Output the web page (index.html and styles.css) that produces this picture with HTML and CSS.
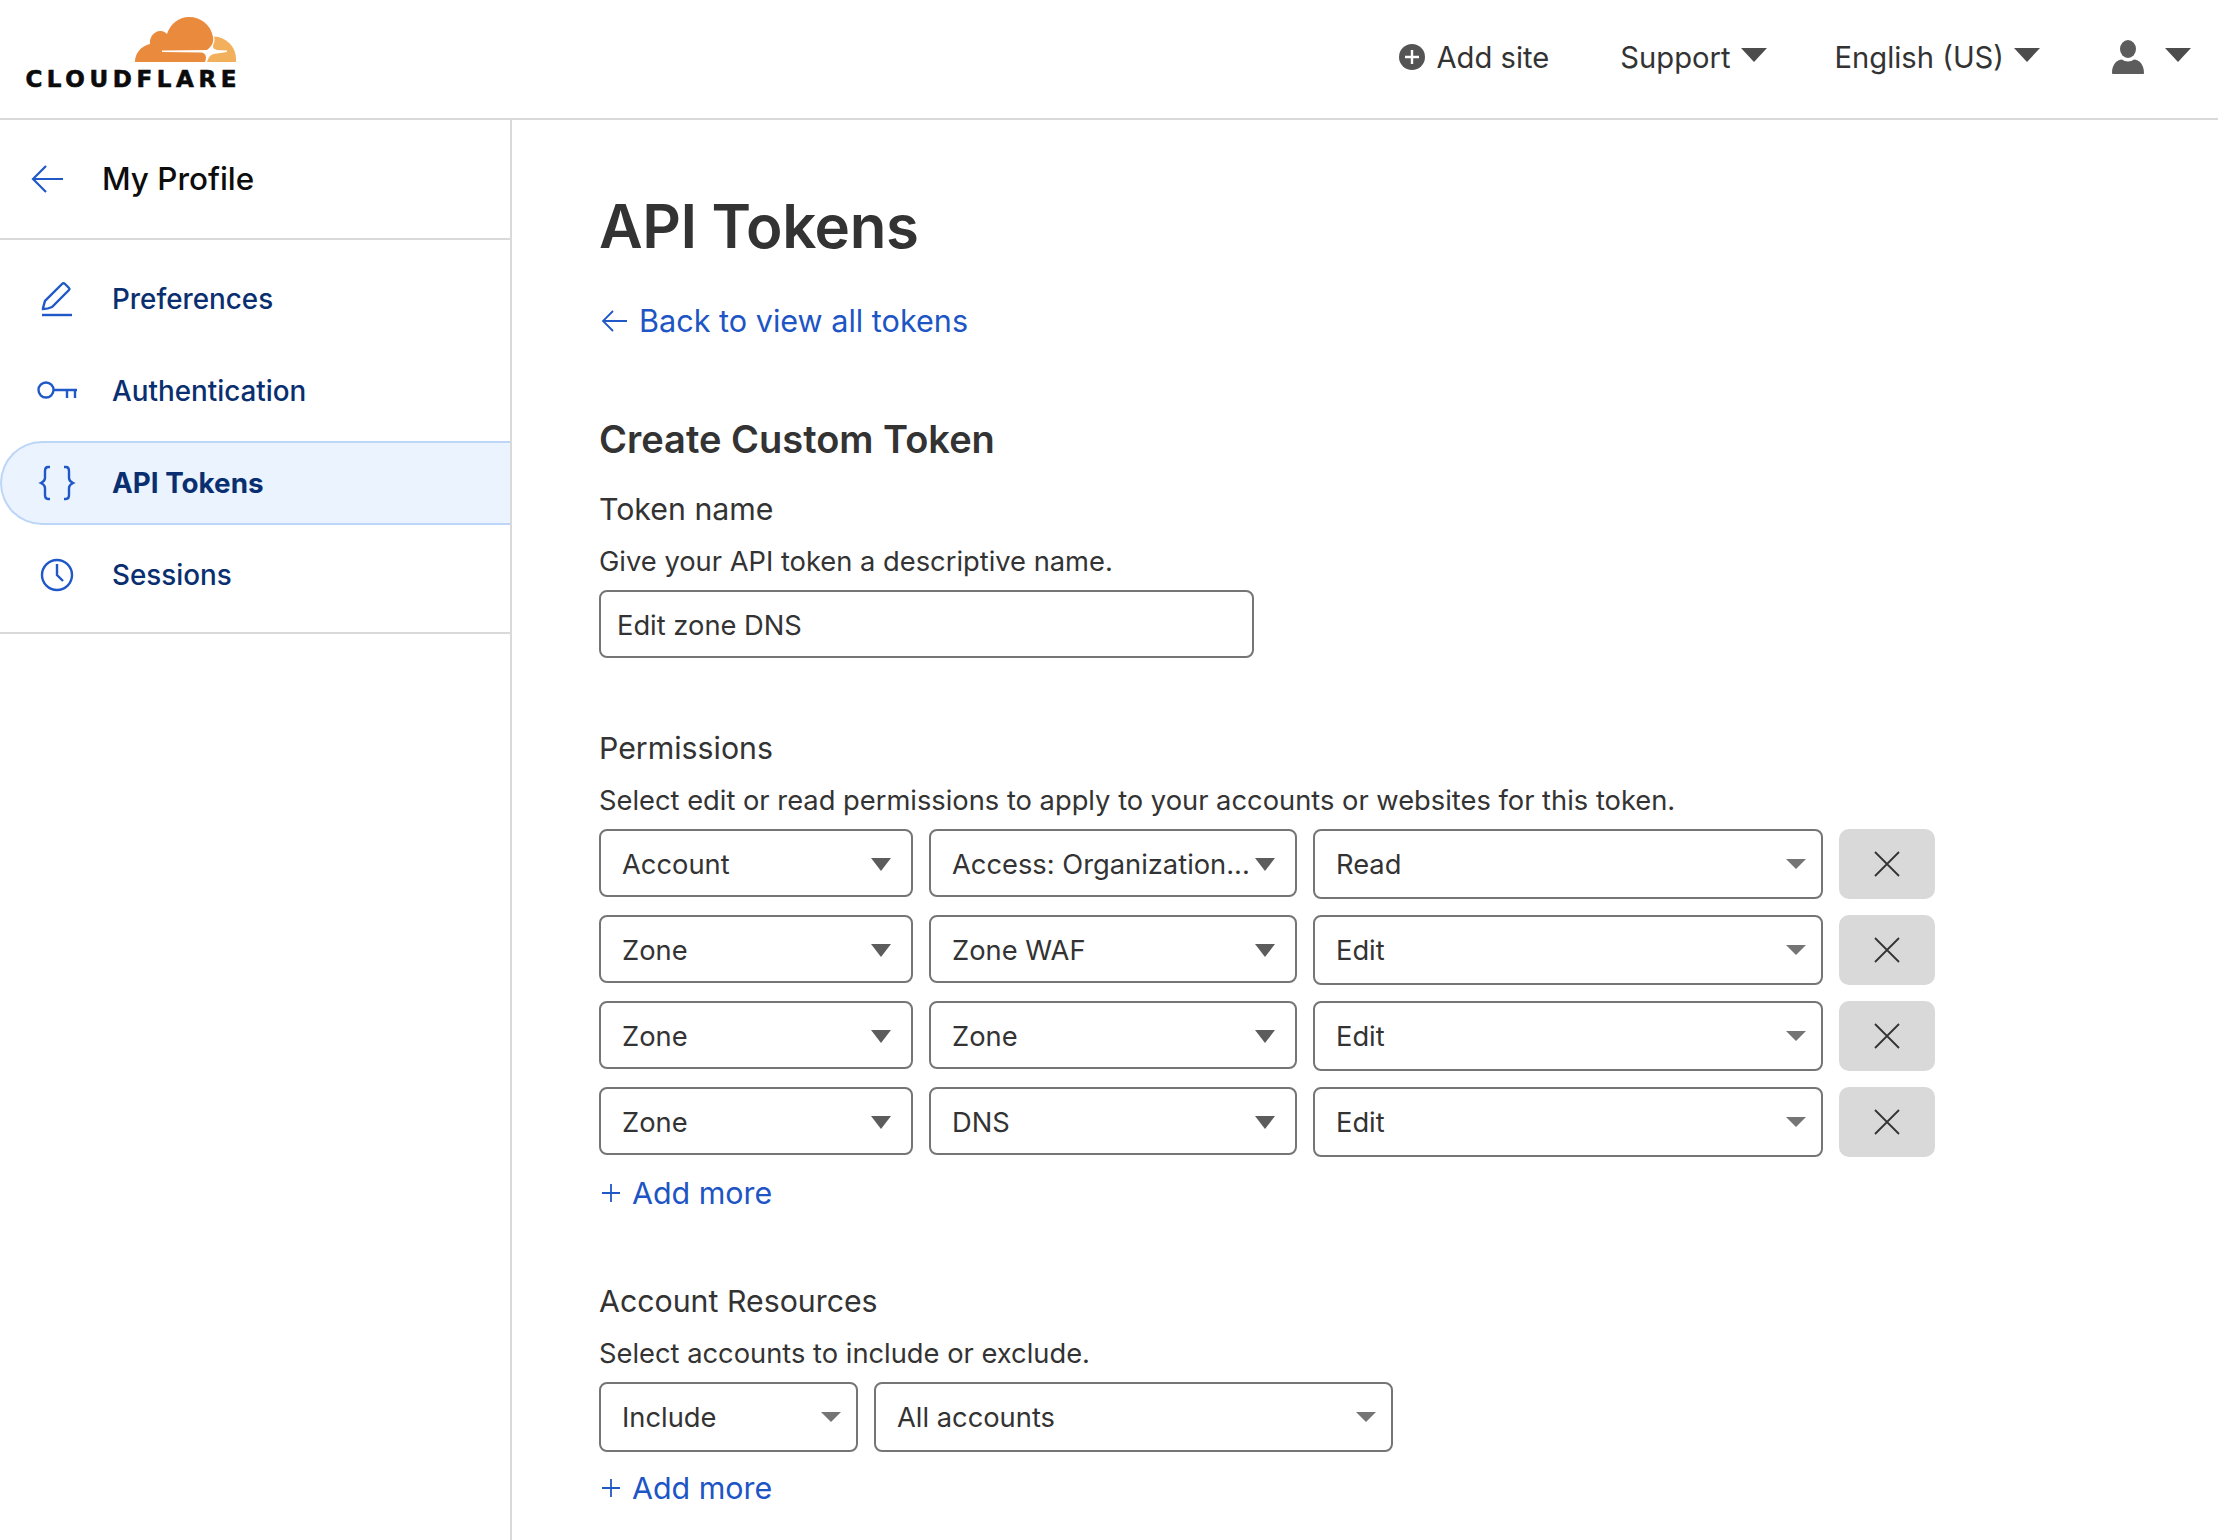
FILE: index.html
```html
<!DOCTYPE html>
<html lang="en">
<head>
    <meta charset="UTF-8">
    <meta name="viewport" content="width=device-width, initial-scale=1.0">
    <title>API Tokens</title>
    <link rel="stylesheet" href="styles.css">
</head>
<body>

    <header class="topbar">
        <a class="logo" href="#">
            <svg class="logo-cloud" viewBox="0 0 101 46" width="101" height="46">
                <path fill="#e98a3c" d="M0 45C0 36 6 29 15 27C14 20 20 13 26 14C28 14 30 15 32 17C35 7 44 0 54 0C66 0 76 8 78 20C79 25 77 29 72 33L27 33.6V35L66 35.500C71 36 72 40 70 45Z"/>
                <path fill="#f2b05c" d="M79 19.500C91 20 101 30 101 41V45H72C74 39 76 37 82 36.500L92 35V33.500L82 33C78 32 77.500 30 78.500 27C79.500 25 80 22 79 19.500Z"/>
            </svg>
            <span class="logo-text">CLOUDFLARE</span>
        </a>
        <nav class="topnav">
            <a class="topnav-item topnav-add" href="#">
                <svg viewBox="0 0 26 26" width="26" height="26">
                    <circle cx="13" cy="13" r="13" fill="#545454"/>
                    <path d="M13 6v14M6 13h14" stroke="#fff" stroke-width="2.400"/>
                </svg>
                Add site
            </a>
            <a class="topnav-item topnav-support" href="#">Support <span class="caret caret-lg"></span></a>
            <a class="topnav-item topnav-lang" href="#">English (US) <span class="caret caret-lg"></span></a>
            <a class="topnav-item topnav-user" href="#">
                <svg viewBox="0 0 32 34" width="32" height="34">
                    <ellipse cx="16" cy="9" rx="8" ry="9" fill="#5c5c5c"/>
                    <path d="M0 33C0 24 5 20 10 19.500C13 22 19 22 22 19.500C27 20 32 24 32 33C32 34 31 34 30 34H2C1 34 0 34 0 33Z" fill="#5c5c5c"/>
                </svg>
                <span class="caret caret-lg"></span>
            </a>
        </nav>
    </header>

    <div class="layout">
        <aside class="sidebar">
            <div class="sidebar-title">
                <svg class="back-icon" viewBox="0 0 32 28" width="32" height="28">
                    <path d="M32 14H2M15 1L2 14l13 13" fill="none" stroke="#2058c8" stroke-width="2.200"/>
                </svg>
                <span>My Profile</span>
            </div>
            <ul class="side-nav">
                <li class="side-item">
                    <svg viewBox="0 0 44 40" width="44" height="40">
                        <path d="M8 29l2-7L27 5c1-1 2-1 3 0l4 4c1 1 0 2-0 2L17 28c-2 1-6 2-9 2v-1z" fill="none" stroke="#2058c8" stroke-width="2.400"/>
                        <path d="M7 36h30" stroke="#2058c8" stroke-width="2.400"/>
                    </svg>
                    Preferences
                </li>
                <li class="side-item">
                    <svg viewBox="0 0 44 40" width="44" height="40">
                        <circle cx="11" cy="19" r="7.500" fill="none" stroke="#2058c8" stroke-width="2.400"/>
                        <path d="M18 19h24M32 19v8M40 19v8" fill="none" stroke="#2058c8" stroke-width="2.400"/>
                    </svg>
                    Authentication
                </li>
                <li class="side-item side-item-active">
                    <svg viewBox="0 0 44 40" width="44" height="40">
                        <path d="M15 4h-2c-3 0-3 2-3 4v7c0 3-2 4-4 5 2 1 4 2 4 5v7c0 2 0 4 3 4h2M29 4h2c3 0 3 2 3 4v7c0 3 2 4 4 5-2 1-4 2-4 5v7c0 2 0 4-3 4h-2" fill="none" stroke="#2058c8" stroke-width="2.400"/>
                    </svg>
                    API Tokens
                </li>
                <li class="side-item">
                    <svg viewBox="0 0 44 40" width="44" height="40">
                        <circle cx="22" cy="20" r="15" fill="none" stroke="#2058c8" stroke-width="2.400"/>
                        <path d="M22 9v11l6 6" fill="none" stroke="#2058c8" stroke-width="2.400"/>
                    </svg>
                    Sessions
                </li>
            </ul>
        </aside>

        <main class="content">
            <h1 class="page-title">API Tokens</h1>
            <a class="back-link" href="#">
                <svg viewBox="0 0 26 24" width="26" height="24">
                    <path d="M26 12H2M12 2L2 12l10 10" fill="none" stroke="#2058c8" stroke-width="1.800"/>
                </svg>
                Back to view all tokens
            </a>

            <h2 class="section-title">Create Custom Token</h2>

            <h3 class="field-title field-title-first">Token name</h3>
            <p class="field-desc">Give your API token a descriptive name.</p>
            <div class="text-input">Edit zone DNS</div>

            <h3 class="field-title field-title-perms">Permissions</h3>
            <p class="field-desc">Select edit or read permissions to apply to your accounts or websites for this token.</p>
            <div class="rows">
                <div class="row">
                    <div class="select w-scope">Account<span class="caret"></span></div>
                    <div class="select w-item">Access: Organization...<span class="caret"></span></div>
                    <div class="select select-wide w-level">Read<span class="caret"></span></div>
                    <button class="remove-btn"><svg viewBox="0 0 26 26" width="26" height="26"><path d="M1 1l24 24M25 1L1 25" stroke="#333" stroke-width="1.800"/></svg></button>
                </div>
                <div class="row">
                    <div class="select w-scope">Zone<span class="caret"></span></div>
                    <div class="select w-item">Zone WAF<span class="caret"></span></div>
                    <div class="select select-wide w-level">Edit<span class="caret"></span></div>
                    <button class="remove-btn"><svg viewBox="0 0 26 26" width="26" height="26"><path d="M1 1l24 24M25 1L1 25" stroke="#333" stroke-width="1.800"/></svg></button>
                </div>
                <div class="row">
                    <div class="select w-scope">Zone<span class="caret"></span></div>
                    <div class="select w-item">Zone<span class="caret"></span></div>
                    <div class="select select-wide w-level">Edit<span class="caret"></span></div>
                    <button class="remove-btn"><svg viewBox="0 0 26 26" width="26" height="26"><path d="M1 1l24 24M25 1L1 25" stroke="#333" stroke-width="1.800"/></svg></button>
                </div>
                <div class="row">
                    <div class="select w-scope">Zone<span class="caret"></span></div>
                    <div class="select w-item">DNS<span class="caret"></span></div>
                    <div class="select select-wide w-level">Edit<span class="caret"></span></div>
                    <button class="remove-btn"><svg viewBox="0 0 26 26" width="26" height="26"><path d="M1 1l24 24M25 1L1 25" stroke="#333" stroke-width="1.800"/></svg></button>
                </div>
            </div>
            <a class="add-more" href="#">
                <svg viewBox="0 0 18 18" width="18" height="18"><path d="M9 0v18M0 9h18" stroke="#2058c8" stroke-width="1.800"/></svg>
                Add more
            </a>

            <h3 class="field-title field-title-res">Account Resources</h3>
            <p class="field-desc">Select accounts to include or exclude.</p>
            <div class="row">
                <div class="select select-wide w-include">Include<span class="caret"></span></div>
                <div class="select select-wide w-accounts">All accounts<span class="caret"></span></div>
            </div>
            <a class="add-more" href="#">
                <svg viewBox="0 0 18 18" width="18" height="18"><path d="M9 0v18M0 9h18" stroke="#2058c8" stroke-width="1.800"/></svg>
                Add more
            </a>
        </main>
    </div>

</body>
</html>
```

FILE: styles.css
```css
* {
    box-sizing: border-box;
}

body {
    font-family: Inter, "Liberation Sans", sans-serif;
    margin: 0;
    color: #333;
    background-color: #fff;
    height: 1540px;
    overflow: hidden;
}

a {
    text-decoration: none;
    color: inherit;
}

/* Top bar */
.topbar {
    height: 120px;
    border-bottom: 2px solid #d9d9d9;
    display: flex;
    justify-content: space-between;
    align-items: flex-start;
}

.logo {
    display: flex;
    flex-direction: column;
    align-items: flex-end;
    width: 238px;
    padding-top: 17px;
}

.logo-cloud {
    display: block;
    margin-right: 2px;
}

.logo-text {
    font-family: "DejaVu Sans", sans-serif;
    font-weight: 700;
    font-size: 23px;
    line-height: 23px;
    letter-spacing: 4.6px;
    margin-right: -3px;
    margin-top: 5px;
    color: #0b0b0b;
    -webkit-text-stroke: 0.6px #0b0b0b;
}

.topnav {
    display: flex;
    align-items: center;
    height: 114px;
    font-size: 29.2px;
    color: #333;
}

.topnav-item {
    display: flex;
    align-items: center;
    gap: 10px;
}

.topnav-add {
    gap: 11px;
    margin-right: 71px;
}

.topnav-support {
    margin-right: 68px;
}

.topnav-lang {
    margin-right: 72px;
}

.topnav-user {
    margin-right: 27px;
    gap: 21px;
}

.caret {
    width: 0;
    height: 0;
    border-left: 10px solid transparent;
    border-right: 10px solid transparent;
    border-top: 13px solid #5c5c5c;
    flex: none;
}

.caret-lg {
    border-left-width: 13px;
    border-right-width: 13px;
    border-top-width: 14px;
    border-top-color: #4c4c4c;
    margin-top: -4px;
}

/* Layout */
.layout {
    display: flex;
    height: 1420px;
}

.sidebar {
    width: 512px;
    border-right: 2px solid #d9d9d9;
    flex: none;
}

.sidebar-title {
    height: 120px;
    border-bottom: 2px solid #d9d9d9;
    display: flex;
    align-items: center;
    padding-left: 31px;
    gap: 39px;
    font-size: 31.4px;
    font-weight: 500;
    color: #0d0d0d;
}

.side-nav {
    list-style: none;
    margin: 0;
    padding: 17px 0 15px;
    border-bottom: 2px solid #d9d9d9;
}

.side-item {
    height: 84px;
    margin-bottom: 8px;
    display: flex;
    align-items: center;
    padding-left: 33px;
    gap: 33px;
    font-size: 27.8px;
    font-weight: 500;
    color: #0a2f70;
    border: 2px solid transparent;
    border-right: 0;
}

.side-item:last-child {
    margin-bottom: 0;
}

.side-item-active {
    font-weight: 700;
    background-color: #ebf3fe;
    border-color: #bdd6f7;
    border-radius: 42px 0 0 42px;
}

/* Main content */
.content {
    padding: 0 0 0 87px;
    flex: 1;
}

.page-title {
    font-size: 60px;
    line-height: 72px;
    font-weight: 600;
    letter-spacing: -0.4px;
    margin: 70px 0 0;
}

.back-link {
    display: flex;
    align-items: center;
    gap: 12px;
    font-size: 30.6px;
    line-height: 40px;
    color: #1d55c4;
    margin-top: 39px;
    padding-left: 2px;
}

.section-title {
    font-size: 38px;
    line-height: 48px;
    font-weight: 600;
    margin: 74px 0 0;
}

.field-title {
    font-size: 30.3px;
    line-height: 40px;
    font-weight: 400;
    margin: 0;
}

.field-title-first {
    margin-top: 26px;
}

.field-title-perms {
    margin-top: 70px;
}

.field-title-res {
    margin-top: 68px;
}

.field-desc {
    font-size: 27.3px;
    line-height: 36px;
    margin: 15px 0 10px;
}

.text-input {
    width: 655px;
    height: 68px;
    border: 2px solid #757575;
    border-radius: 8px;
    font-size: 27.3px;
    display: flex;
    align-items: center;
    padding: 2px 0 0 16px;
}

.rows {
    display: flex;
    flex-direction: column;
    gap: 16px;
}

.row {
    display: flex;
    align-items: flex-start;
    gap: 16px;
}

.select {
    height: 68px;
    border: 2px solid #757575;
    border-radius: 8px;
    font-size: 27.3px;
    display: flex;
    align-items: center;
    justify-content: space-between;
    padding: 2px 20px 0 21px;
    white-space: nowrap;
}

.select-wide {
    height: 70px;
    padding: 0 15px 0 21px;
}

.select-wide .caret {
    border-top-width: 10px;
    border-top-color: #757575;
}

.w-scope {
    width: 314px;
}

.w-item {
    width: 368px;
}

.w-level {
    width: 510px;
}

.w-include {
    width: 259px;
}

.w-accounts {
    width: 519px;
}

.remove-btn {
    width: 96px;
    height: 70px;
    border: 0;
    border-radius: 10px;
    background-color: #d9d9d9;
    display: flex;
    align-items: center;
    justify-content: center;
    padding: 0;
}

.add-more {
    display: flex;
    align-items: center;
    gap: 12px;
    font-size: 30.4px;
    line-height: 40px;
    color: #1d55c4;
    margin-top: 16px;
    padding-left: 3px;
}
```
